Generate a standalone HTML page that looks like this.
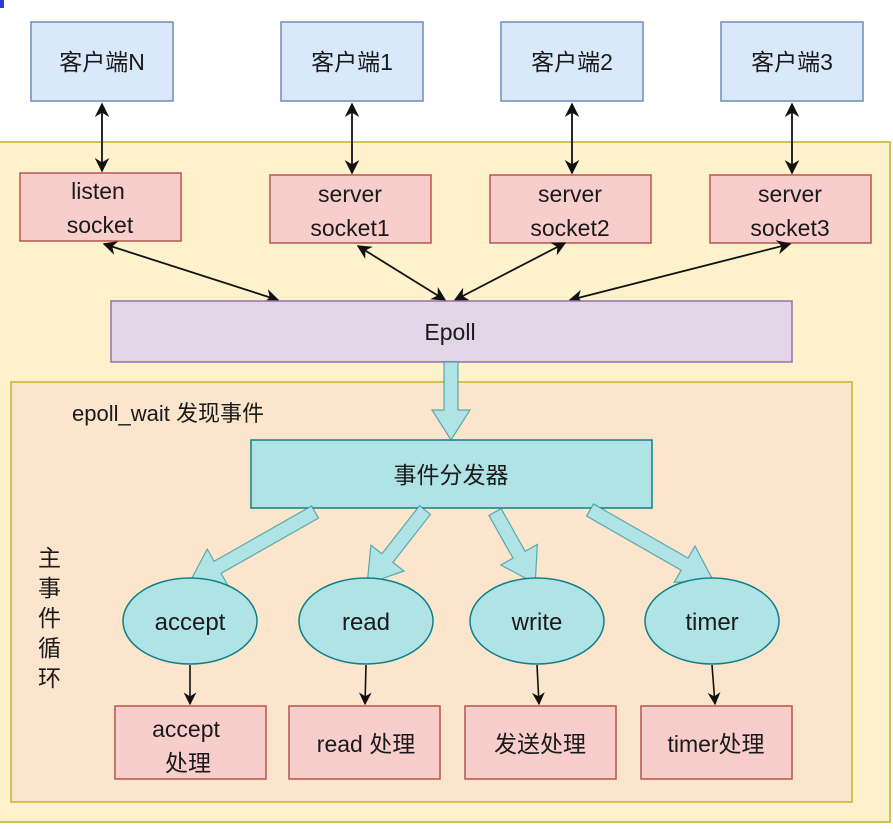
<!DOCTYPE html>
<html><head><meta charset="utf-8"><style>
html,body{margin:0;padding:0;background:#fff;}
svg{display:block;}
text{font-family:"Liberation Sans","Noto Sans CJK SC",sans-serif;fill:#1a1a1a;font-size:23px;}
</style></head><body>
<svg width="893" height="829" viewBox="0 0 893 829" xmlns="http://www.w3.org/2000/svg">
<defs>
<marker id="ah" viewBox="0 0 10 10" refX="9" refY="5" markerWidth="8" markerHeight="8" orient="auto-start-reverse"><path d="M0,0 L10,5 L0,10 L3,5 z" fill="#111"/></marker>
</defs>
<rect x="0" y="0" width="4" height="8" fill="#2b3bd6"/>
<rect x="-2" y="142" width="892" height="680" fill="#fdf2cc" stroke="#d6c056" stroke-width="2"/>
<g fill="#dae8fc" stroke="#6c8ebf" stroke-width="1.5">
<rect x="31" y="22" width="142" height="79"/><rect x="281" y="22" width="142" height="79"/>
<rect x="501" y="22" width="142" height="79"/><rect x="721" y="22" width="142" height="79"/>
</g>
<text x="102" y="70" text-anchor="middle">客户端N</text>
<text x="352" y="70" text-anchor="middle">客户端1</text>
<text x="572" y="70" text-anchor="middle">客户端2</text>
<text x="792" y="70" text-anchor="middle">客户端3</text>
<g fill="#f8cecc" stroke="#b85450" stroke-width="1.5">
<rect x="20" y="173" width="161" height="68"/><rect x="270" y="175" width="161" height="68"/>
<rect x="490" y="175" width="161" height="68"/><rect x="710" y="175" width="161" height="68"/>
</g>
<text x="98" y="199" text-anchor="middle">listen</text><text x="100" y="233" text-anchor="middle">socket</text>
<text x="350" y="202" text-anchor="middle">server</text><text x="350" y="236" text-anchor="middle">socket1</text>
<text x="570" y="202" text-anchor="middle">server</text><text x="570" y="236" text-anchor="middle">socket2</text>
<text x="790" y="202" text-anchor="middle">server</text><text x="790" y="236" text-anchor="middle">socket3</text>
<g stroke="#111" stroke-width="1.8" marker-start="url(#ah)" marker-end="url(#ah)">
<line x1="102" y1="104" x2="102" y2="171"/>
<line x1="352" y1="104" x2="352" y2="173"/>
<line x1="572" y1="104" x2="572" y2="173"/>
<line x1="792" y1="104" x2="792" y2="173"/>
<line x1="104" y1="244" x2="278" y2="300"/>
<line x1="358" y1="246" x2="445" y2="300"/>
<line x1="565" y1="243" x2="455" y2="300"/>
<line x1="790" y1="244" x2="570" y2="300"/>
</g>
<rect x="111" y="301" width="681" height="61" fill="#e1d5e7" stroke="#9673a6" stroke-width="1.5"/>
<text x="450" y="340" text-anchor="middle">Epoll</text>
<rect x="11" y="382" width="841" height="420" fill="#fbe5cd" stroke="#d6c056" stroke-width="2"/>
<text x="72" y="421" style="font-size:22px">epoll_wait 发现事件</text>
<g style="font-size:23px">
<text x="38" y="566">主</text><text x="38" y="596">事</text><text x="38" y="626">件</text><text x="38" y="656">循</text><text x="38" y="686">环</text>
</g>
<rect x="251" y="440" width="401" height="68" fill="#b0e3e6" stroke="#0e8088" stroke-width="1.5"/>
<text x="451" y="483" text-anchor="middle">事件分发器</text>
<g fill="#b0e3e6" stroke="#0e8088" stroke-width="1.2" stroke-opacity="0.6">
<polygon transform="translate(451,362) rotate(90)" points="0,-7 48,-7 48,-19 78,0 48,19 48,7 0,7"/>
<polygon transform="translate(315,512) rotate(150.4)" points="0,-7 112,-7 112,-21 145,0 112,21 112,7 0,7"/>
<polygon transform="translate(425,510) rotate(128)" points="0,-7 61,-7 61,-21 94,0 61,21 61,7 0,7"/>
<polygon transform="translate(495,512) rotate(60.6)" points="0,-7 49,-7 49,-21 82,0 49,21 49,7 0,7"/>
<polygon transform="translate(590,510) rotate(29.8)" points="0,-7 109,-7 109,-21 142,0 109,21 109,7 0,7"/>
</g>
<g fill="#b0e3e6" stroke="#0e8088" stroke-width="1.5">
<ellipse cx="190" cy="621" rx="67" ry="43"/><ellipse cx="366" cy="621" rx="67" ry="43"/>
<ellipse cx="537" cy="621" rx="67" ry="43"/><ellipse cx="712" cy="621" rx="67" ry="43"/>
</g>
<text x="190" y="630" text-anchor="middle" style="font-size:24px">accept</text>
<text x="366" y="630" text-anchor="middle" style="font-size:24px">read</text>
<text x="537" y="630" text-anchor="middle" style="font-size:24px">write</text>
<text x="712" y="630" text-anchor="middle" style="font-size:24px">timer</text>
<g stroke="#111" stroke-width="1.6" marker-end="url(#ah)">
<line x1="190" y1="665" x2="190" y2="704"/><line x1="366" y1="665" x2="365" y2="704"/>
<line x1="537" y1="665" x2="539" y2="704"/><line x1="712" y1="665" x2="715" y2="704"/>
</g>
<g fill="#f8cecc" stroke="#b85450" stroke-width="1.5">
<rect x="115" y="706" width="151" height="73"/><rect x="289" y="706" width="151" height="73"/>
<rect x="465" y="706" width="151" height="73"/><rect x="641" y="706" width="151" height="73"/>
</g>
<text x="186" y="737" text-anchor="middle">accept</text><text x="188" y="771" text-anchor="middle">处理</text>
<text x="366" y="752" text-anchor="middle">read 处理</text>
<text x="540" y="752" text-anchor="middle">发送处理</text>
<text x="716" y="752" text-anchor="middle">timer处理</text>
</svg>
</body></html>
